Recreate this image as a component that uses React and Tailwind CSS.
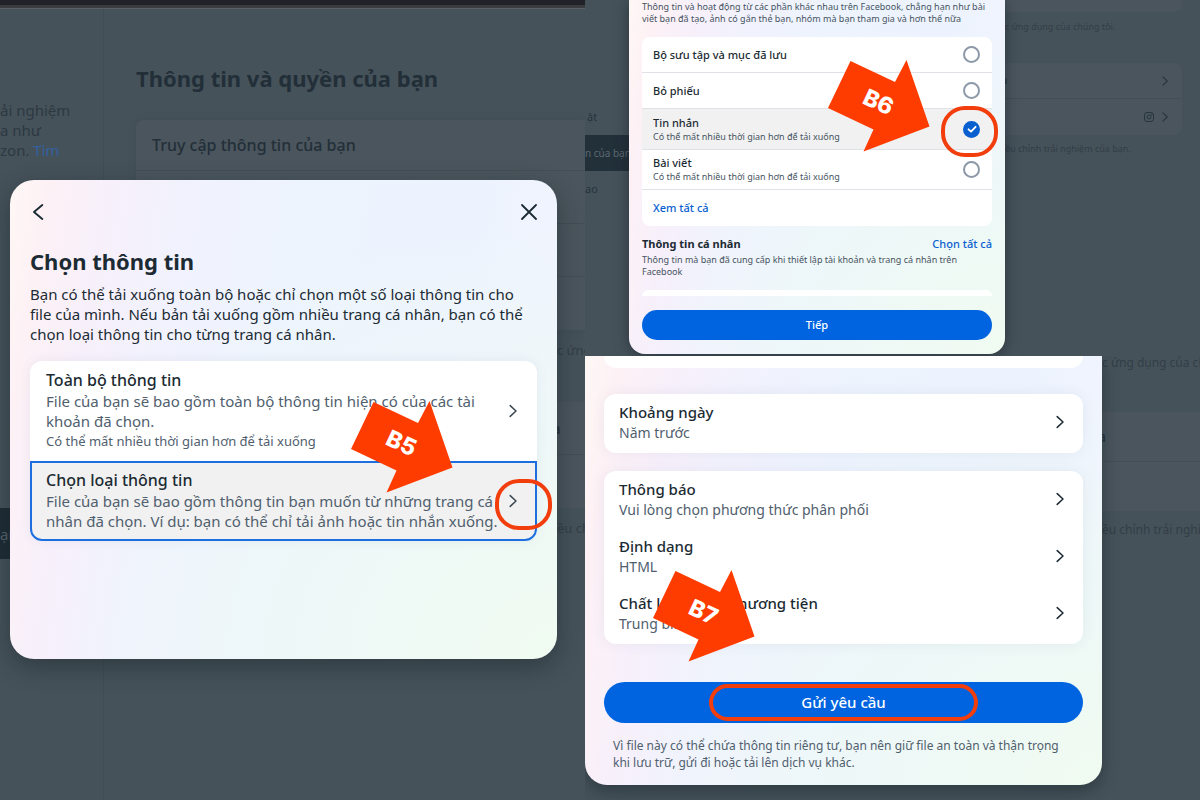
import { useState } from "react";

function Chevron({ className = "", left = false }) {
  return (
    <svg viewBox="0 0 16 16" className={`shrink-0 ${className}`} fill="none" stroke="currentColor" strokeWidth={left ? "1.9" : "1.5"} strokeLinecap="round" strokeLinejoin="round" aria-hidden="true">
      <path d={left ? "M12.3 1L4 8L12.3 15" : "M5.2 2.6L11 8L5.2 13.4"} />
    </svg>
  );
}

function Arrow({ label, className }) {
  return (
    <svg viewBox="0 0 102 92" className={`pointer-events-none absolute h-[92px] w-[102px] ${className}`} role="img" aria-label={label}>
      <polygon points="22.5,1 67,22 78.5,0 101.5,66.5 35.5,91.5 45.5,69.5 0,48" fill="#ff3c00" />
      <text x="50" y="50" textAnchor="middle" transform="rotate(25 50 43)" fill="#ffffff" fontSize="23" fontWeight="800" fontFamily="Inter, sans-serif">
        {label}
      </text>
    </svg>
  );
}

function Ring({ className }) {
  return <span aria-hidden="true" className={`pointer-events-none absolute h-[51px] w-[57px] rounded-[24px] border-4 border-[#f23d0c] ${className}`} />;
}

const surface =
  "bg-[radial-gradient(ellipse_at_bottom_right,#f0fbf1_0%,#eef8f7_30%,transparent_65%),linear-gradient(99deg,#fef8f5_0%,#fdf1f5_6%,#f7f0fb_16%,#f1f2fd_28%,#edf4fe_50%,#edf3fe_75%,#f2f5fe_100%)]";

function LeftBackdrop() {
  return (
    <div className="col-start-1 row-start-1 flex flex-col overflow-hidden">
      <div className="h-[9px] border-t-[5px] border-b border-t-[#202228] border-b-[#5a6063] bg-[#3a3b3f]" />
      <div className="flex flex-1">
        <aside className="flex w-[104px] shrink-0 flex-col border-r border-[#414d55] pt-[91px] text-[15px] leading-5 text-[#2c3942]">
          <p className="whitespace-nowrap">
            ải nghiệm
            <br />a như
            <br />
            zon. <a href="#more" className="text-[#32609f]">Tìm</a>
          </p>
          <div className="mt-[348px] flex h-[51px] items-center bg-[#1f2c35] text-[#56636c]">ạn</div>
        </aside>
        <div className="min-w-0 flex-1 overflow-hidden pt-[54px] pl-8 text-[#222f38]">
          <h1 className="text-[22px] leading-[30px] font-bold">Thông tin và quyền của bạn</h1>
          <div className="mt-[27px] divide-y divide-[#434e56] rounded-l-lg bg-[#4b555d] shadow-[0_0_6px_#414c54]">
            <div className="flex h-[51px] items-center px-4 text-[16px] font-medium">Truy cập thông tin của bạn</div>
            <div className="h-[53px]" />
            <div className="h-[53px]" />
            <div className="h-[53px]" />
          </div>
          <p className="mt-[10px] pl-[421px] text-[13px] leading-5 whitespace-nowrap text-[#323e47]">c ứng</p>
          <div className="mt-[42px] divide-y divide-[#434e56] bg-[#4b555d]">
            <div className="flex h-[53px] items-center pl-[416px] text-[15px] font-medium">a</div>
            <div className="h-[53px]" />
          </div>
          <p className="mt-[10px] pl-[421px] text-[13px] leading-5 whitespace-nowrap text-[#323e47]">ều chỉnh</p>
        </div>
      </div>
    </div>
  );
}

function Option({ title, children, note, selected, onClick }) {
  return (
    <button
      type="button"
      onClick={onClick}
      aria-pressed={selected}
      className={`flex w-full items-center border-2 px-[14px] pt-[7px] pb-2 text-left ${selected ? "rounded-b-xl border-[#1d6fe0] bg-[#f1f1f1]" : "rounded-t-xl border-transparent"}`}
    >
      <span className="min-w-0 flex-1 pr-1">
        <span className="block text-[16px] leading-5 font-medium text-[#1c2b33]">{title}</span>
        <span className="mt-px block text-[15px] leading-5 text-[#50606e]">{children}</span>
        {note && <span className="block text-[13px] leading-5 text-[#50606e]">{note}</span>}
      </span>
      <Chevron className="size-4 text-[#3a4954]" />
    </button>
  );
}

function ChooseInfo() {
  const [kind, setKind] = useState("types");
  return (
    <div role="dialog" aria-labelledby="choose-title" className={`relative col-start-1 row-start-1 mt-[180px] mr-7 ml-[10px] min-h-[479px] self-start rounded-[24px] px-5 pt-5 pb-6 shadow-[0_8px_24px_rgba(20,30,36,0.45)] ${surface}`}>
      <div className="flex h-6 items-center justify-between text-[#1c2b33]">
        <button type="button" aria-label="Quay lại">
          <Chevron left className="size-4" />
        </button>
        <button type="button" aria-label="Đóng">
          <svg viewBox="0 0 16 16" className="size-4" fill="none" stroke="currentColor" strokeWidth="1.8" strokeLinecap="round" aria-hidden="true">
            <path d="M1 1L15 15M15 1L1 15" />
          </svg>
        </button>
      </div>
      <h2 id="choose-title" className="mt-[23px] text-[22px] leading-7 font-bold text-[#1c2b33]">Chọn thông tin</h2>
      <p className="mt-[9px] text-[15px] leading-5 text-[#1c2b33]">
        Bạn có thể tải xuống toàn bộ hoặc chỉ chọn một số loại thông tin cho file của mình. Nếu bản tải xuống gồm nhiều trang cá nhân, bạn có thể chọn loại thông tin cho từng trang cá nhân.
      </p>
      <div className="mt-[17px] rounded-xl bg-white shadow-[0_0_12px_rgba(60,90,130,0.08)]">
        <Option title="Toàn bộ thông tin" note="Có thể mất nhiều thời gian hơn để tải xuống" selected={kind === "all"} onClick={() => setKind("all")}>
          File của bạn sẽ bao gồm toàn bộ thông tin hiện có của các tài khoản đã chọn.
        </Option>
        <Option title="Chọn loại thông tin" selected={kind === "types"} onClick={() => setKind("types")}>
          File của bạn sẽ bao gồm thông tin bạn muốn từ những trang cá nhân đã chọn. Ví dụ: bạn có thể chỉ tải ảnh hoặc tin nhắn xuống.
        </Option>
      </div>
      <Arrow label="B5" className="top-[221px] right-[104px]" />
      <Ring className="top-[299px] right-[5px]" />
    </div>
  );
}

const slow = "Có thể mất nhiều thời gian hơn để tải xuống";
const categories = [
  { id: "saved", title: "Bộ sưu tập và mục đã lưu" },
  { id: "polls", title: "Bỏ phiếu" },
  { id: "messages", title: "Tin nhắn", note: slow },
  { id: "posts", title: "Bài viết", note: slow },
];

function CategoryRow({ id, title, note, checked, onChange }) {
  return (
    <label htmlFor={id} className={`flex items-center justify-between border-b border-[#dfe3e8] pr-3 pl-[11px] ${checked ? "h-[41px] bg-[#f1f1f1]" : note ? "h-10" : "h-9"}`}>
      <span>
        <span className="block text-[11px] leading-[14px] font-medium text-[#1c2b33]">{title}</span>
        {note && <span className="block text-[9px] leading-[13px] text-[#465461]">{note}</span>}
      </span>
      <span className="grid place-items-center">
        <input id={id} type="checkbox" checked={checked} onChange={onChange} className="col-start-1 row-start-1 size-[17px] appearance-none rounded-full border-2 border-[#8d99a9] checked:border-[#0a5fd0] checked:bg-[#0a5fd0]" />
        {checked && (
          <svg viewBox="0 0 16 16" className="pointer-events-none col-start-1 row-start-1 size-4" fill="none" stroke="#ffffff" strokeWidth="1.8" strokeLinecap="round" strokeLinejoin="round" aria-hidden="true">
            <path d="M4.5 8.3L7 10.6L11.6 5.8" />
          </svg>
        )}
      </span>
    </label>
  );
}

function Categories() {
  const [picked, setPicked] = useState({ messages: true });
  return (
    <section className="grid grid-cols-[minmax(0,44fr)_minmax(0,376fr)_minmax(0,195fr)] overflow-hidden bg-[#46525a] pb-0.5">
      <ul className="overflow-hidden pt-[99px] text-[11px] whitespace-nowrap text-[#26333c]">
        <li className="flex h-9 items-center pl-0.5">ật</li>
        <li className="flex h-9 items-center bg-[#22303a] text-[10px] text-[#5d6971]">n của bạn</li>
        <li className="flex h-9 items-center">ao</li>
      </ul>
      <div role="dialog" aria-label="Chọn thông tin cụ thể" className={`relative rounded-b-[16px] shadow-[0_2px_14px_rgba(20,30,36,0.55)] ${surface}`}>
        <div className="px-[13px] pt-px">
          <p className="text-[9px] leading-3 text-[#465461]">Thông tin và hoạt động từ các phần khác nhau trên Facebook, chẳng hạn như bài viết bạn đã tạo, ảnh có gắn thẻ bạn, nhóm mà bạn tham gia và hơn thế nữa</p>
          <div className="mt-3 overflow-hidden rounded-lg bg-white">
            {categories.map((c) => (
              <CategoryRow key={c.id} {...c} checked={!!picked[c.id]} onChange={() => setPicked({ ...picked, [c.id]: !picked[c.id] })} />
            ))}
            <div className="flex h-9 items-center pl-[11px]">
              <a href="#all" className="text-[11px] font-medium text-[#0a5fd0]">Xem tất cả</a>
            </div>
          </div>
          <div className="mt-[10px] flex justify-between text-[11px] leading-4">
            <h3 className="font-bold text-[#1c2b33]">Thông tin cá nhân</h3>
            <button type="button" className="font-medium text-[#0a5fd0]">Chọn tất cả</button>
          </div>
          <p className="mt-0.5 text-[9px] leading-3 text-[#465461]">Thông tin mà bạn đã cung cấp khi thiết lập tài khoản và trang cá nhân trên Facebook</p>
          <div className="mt-3 h-[6px] rounded-t-lg bg-white" />
        </div>
        <div className="px-[13px] py-[14px]">
          <button type="button" className="h-[30px] w-full rounded-full bg-[#0064e0] text-[11px] font-medium text-white">Tiếp</button>
        </div>
        <Arrow label="B6" className="top-[60px] right-[75px]" />
        <Ring className="top-[106px] right-[7px]" />
      </div>
      <div className="text-[#28353e]">
        <div className="mr-[18px] h-3 rounded-br-lg bg-[#4b555d]" />
        <p className="mt-2 text-[9px] leading-[14px] whitespace-nowrap text-[#323e47]">c ứng dụng của chúng tôi.</p>
        <div className="mt-[29px] mr-[18px] -ml-1 divide-y divide-[#434e56] rounded-r-lg bg-[#4b555d]">
          <div className="flex h-9 items-center justify-between pr-[11px] text-[11px] font-medium">
            a
            <Chevron className="size-3" />
          </div>
          <div className="flex h-9 items-center justify-end gap-1 pr-[11px]">
            <svg viewBox="0 0 12 12" className="size-3" fill="none" stroke="currentColor" aria-hidden="true">
              <rect x="1.5" y="1.5" width="9" height="9" rx="2.5" />
              <circle cx="6" cy="6" r="2" />
              <circle cx="8.6" cy="3.4" r="0.3" />
            </svg>
            <Chevron className="size-3" />
          </div>
        </div>
        <p className="mt-[7px] text-[9px] leading-[14px] whitespace-nowrap text-[#323e47]">ều chỉnh trải nghiệm của bạn.</p>
      </div>
    </section>
  );
}

function SettingRow({ title, value }) {
  return (
    <button type="button" className="flex h-[57px] w-full items-center justify-between px-[15px] pb-[3px] text-left">
      <span>
        <span className="block text-[15px] leading-5 font-medium text-[#1c2b33]">{title}</span>
        <span className="mt-px block text-[14px] leading-5 text-[#50606e]">{value}</span>
      </span>
      <Chevron className="size-4 text-[#1c2b33]" />
    </button>
  );
}

function Request() {
  return (
    <section className="grid grid-cols-[minmax(0,517fr)_minmax(0,98fr)] items-start overflow-hidden bg-[#46525a] pb-[15px]">
      <div role="dialog" aria-label="Tải thông tin xuống" className={`relative rounded-b-[22px] px-[19px] pb-[14px] shadow-[0_6px_16px_rgba(20,30,36,0.45)] ${surface}`}>
        <div className="h-3 rounded-b-xl bg-white" />
        <div className="mt-[26px] rounded-xl bg-white py-px shadow-[0_0_14px_rgba(60,90,130,0.08)]">
          <SettingRow title="Khoảng ngày" value="Năm trước" />
        </div>
        <div className="mt-[18px] rounded-xl bg-white py-px shadow-[0_0_14px_rgba(60,90,130,0.08)]">
          <SettingRow title="Thông báo" value="Vui lòng chọn phương thức phân phối" />
          <SettingRow title="Định dạng" value="HTML" />
          <SettingRow title="Chất lượng file phương tiện" value="Trung bình" />
        </div>
        <button type="button" className="relative mt-[38px] h-[41px] w-full rounded-full bg-[#0064e0] text-[15px] font-medium text-white">
          Gửi yêu cầu
          <span aria-hidden="true" className="absolute inset-x-[105px] inset-y-0.5 rounded-full border-4 border-[#f23d0c]" />
        </button>
        <p className="mt-[14px] px-[9px] text-[12px] leading-[17px] text-[#50606e]">Vì file này có thể chứa thông tin riêng tư, bạn nên giữ file an toàn và thận trọng khi lưu trữ, gửi đi hoặc tải lên dịch vụ khác.</p>
        <Arrow label="B7" className="top-[214px] left-[68px]" />
      </div>
      <div className="whitespace-nowrap text-[#28353e]">
        <p className="text-[12px] leading-[14px] text-[#323e47]">c ứng dụng của chúng tôi.</p>
        <div className="mt-[42px] -ml-1 divide-y divide-[#434e56] bg-[#4b555d]">
          <div className="flex h-[50px] items-center text-[14px] font-medium">a</div>
          <div className="h-[49px]" />
        </div>
        <p className="mt-[10px] text-[12px] leading-[18px] text-[#323e47]">ều chỉnh trải nghiệm</p>
      </div>
    </section>
  );
}

export default function App() {
  return (
    <main className="grid min-h-screen grid-cols-[minmax(0,585fr)_minmax(0,615fr)] bg-[#46525a] font-['Noto_Sans',sans-serif]">
      <section className="grid grid-cols-1 overflow-hidden">
        <LeftBackdrop />
        <ChooseInfo />
      </section>
      <div className="grid grid-rows-[auto_1fr]">
        <Categories />
        <Request />
      </div>
    </main>
  );
}
